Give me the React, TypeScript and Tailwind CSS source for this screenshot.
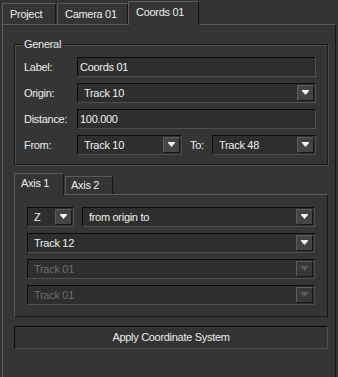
import { PropsWithChildren } from "react";

const font = "font-['Tahoma','Liberation_Sans',sans-serif] text-[11px] tracking-[-0.3px]";

function Arrow({ disabled }: { disabled?: boolean }) {
  return (
    <svg width="9" height="6" viewBox="0 0 9 6" className="block">
      <path d="M1 1h7L4.5 5z" fill={disabled ? "#5a5a5a" : "#f2f2f2"} />
      <rect x="1" y="0" width="7" height="1" fill={disabled ? "#5a5a5a" : "#f2f2f2"} />
    </svg>
  );
}

interface SelectProps {
  value: string;
  disabled?: boolean;
  className?: string;
}

const Select = ({ value, disabled, className = "" }: SelectProps) => {
  return (
    <div
      className={
        "flex h-[20px] items-center border border-t-[#0c0c0c] border-l-[#0c0c0c] border-b-[#505050] border-r-[#505050] bg-[#2e2e2e] pl-[6px] pr-[1px] " +
        className
      }
    >
      <span className={"flex-grow truncate " + (disabled ? "text-[#6c6c6c]" : "text-[#f0f0f0]")}>{value}</span>
      <span
        className={
          "flex h-[16px] w-[17px] items-center justify-center border border-t-[#5c5c5c] border-l-[#5c5c5c] border-b-[#1a1a1a] border-r-[#1a1a1a] " +
          (disabled ? "bg-[#383838]" : "bg-[#444444]")
        }
      >
        <Arrow disabled={disabled} />
      </span>
    </div>
  );
};

const TextInput = ({ value }: { value: string }) => {
  return (
    <div className="flex h-[20px] flex-grow items-center border border-t-[#0c0c0c] border-l-[#0c0c0c] border-b-[#505050] border-r-[#505050] bg-[#2e2e2e] pl-[2px] text-[#f0f0f0]">
      {value}
    </div>
  );
};

const Row = ({ label, children }: PropsWithChildren<{ label: string }>) => {
  return (
    <div className="flex items-center">
      <span className="w-[53px] text-[#ececec]">{label}</span>
      {children}
    </div>
  );
};

interface TabProps {
  active?: boolean;
  className?: string;
}

// heights are given by className, active tab overlaps the panel's top edge by 1px
const Tab = ({ active, className = "", children }: PropsWithChildren<TabProps>) => {
  return (
    <div
      className={
        "relative flex items-center border-t border-l border-r border-t-[#5a5a5a] border-l-[#5a5a5a] border-r-[#161616] bg-[#353535] text-[#ececec] " +
        (active ? "z-10 -mb-px pb-[3px] " : "") +
        className
      }
    >
      {children}
    </div>
  );
};

export default function App() {
  return (
    <div className={"h-[377px] w-[338px] overflow-hidden bg-[#333333] " + font}>
      <div className="flex items-end pl-[2px] pt-[1px]">
        <Tab className="h-[21px] w-[54px] pl-[7px]">Project</Tab>
        <Tab className="ml-[1px] h-[21px] w-[71px] pl-[7px]">Camera 01</Tab>
        <Tab active className="h-[24px] w-[71px] pl-[7px]">
          Coords 01
        </Tab>
      </div>
      <div className="mx-[2px] h-[360px] border-t border-l border-r border-t-[#5a5a5a] border-l-[#5a5a5a] border-r-[#161616] bg-[#353535] pt-[19px] pr-[7px] pl-[11px]">
        <div className="relative border border-[#1c1c1c] pt-[12px] pr-[11px] pb-[9px] pl-[9px] shadow-[inset_1px_1px_0_#4c4c4c,1px_1px_0_#4c4c4c]">
          <span className="absolute top-[-7px] left-[7px] bg-[#353535] px-[2px] leading-[13px] text-[#ececec]">
            General
          </span>
          <div className="flex flex-col gap-[6px]">
            <Row label="Label:">
              <TextInput value="Coords 01" />
            </Row>
            <Row label="Origin:">
              <Select value="Track 10" className="flex-grow" />
            </Row>
            <Row label="Distance:">
              <TextInput value="100.000" />
            </Row>
            <Row label="From:">
              <Select value="Track 10" className="w-[105px]" />
              <span className="w-[30px] pl-[8px] text-[#ececec]">To:</span>
              <Select value="Track 48" className="flex-grow" />
            </Row>
          </div>
        </div>

        <div className="mt-[8px] flex items-end">
          <Tab active className="h-[22px] w-[50px] pl-[6px]">
            Axis 1
          </Tab>
          <Tab className="ml-px h-[18px] w-[48px] pl-[5px]">Axis 2</Tab>
        </div>
        <div className="border border-t-[#5a5a5a] border-l-[#5a5a5a] border-b-[#161616] border-r-[#161616] px-[12px] pt-[12px] pb-[11px]">
          <div className="flex flex-col gap-[6px]">
            <div className="flex gap-[8px]">
              <Select value="Z" className="w-[47px]" />
              <Select value="from origin to" className="flex-grow" />
            </div>
            <Select value="Track 12" />
            <Select value="Track 01" disabled />
            <Select value="Track 01" disabled />
          </div>
        </div>

        <button
          type="button"
          className="mt-[9px] flex h-[23px] w-full items-center justify-center border border-t-[#0c0c0c] border-l-[#0c0c0c] border-b-[#505050] border-r-[#505050] bg-[#333333] text-[#ececec]"
        >
          Apply Coordinate System
        </button>
      </div>
    </div>
  );
}
